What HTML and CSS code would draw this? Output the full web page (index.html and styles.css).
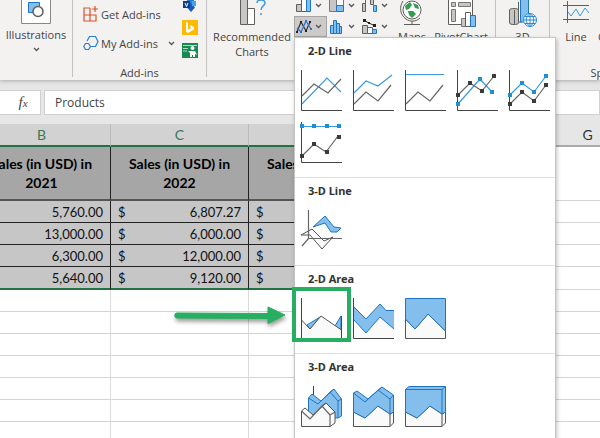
FILE: index.html
```html
<!DOCTYPE html>
<html lang="en">
<head>
	<meta charset="utf-8">
	<title>Sales workbook</title>
	<meta name="viewport" content="width=device-width, initial-scale=1">
	<link rel="stylesheet" href="styles.css">
</head>
<body>
	<div class="ribbon">
		<div class="group group-illustrations">
			<button class="big-btn">
				<svg class="boxed" width="30" height="24" viewBox="0 0 30 24">
					<path d="M.5 0V23.5H29.5V0" fill="#fff" stroke="#8a8886"/>
					<path d="M7.500 2.500H18.500V12.500H7.500Z" fill="#83beec" stroke="#1e76c3"/>
					<circle cx="17" cy="11.500" r="5" fill="#fff" stroke="#605e5c" stroke-width="1.500"/>
				</svg>
				<span>Illustrations</span>
				<svg class="caret" width="7" height="5" viewBox="0 0 7 5"><path d="M1 1L3.500 3.500L6 1"/></svg>
			</button>
		</div>
		<div class="group group-addins">
			<div class="group-body">
				<div class="addins">
					<button class="row-btn">
						<svg width="16" height="16" viewBox="0 0 16 16" fill="none" stroke="#d8532b" stroke-width="1.200">
							<path d="M7 2H1V15H13V9H1M7 2V15M12 0V6M9 3H15"/>
						</svg>
						<span>Get Add-ins</span>
					</button>
					<button class="row-btn">
						<svg width="16" height="16" viewBox="0 0 16 16" fill="none" stroke="#2b7cc7" stroke-width="1.200">
							<path d="M4 6L6.500 1.500H12.500L15 6.500L12.500 11.500H8"/>
							<path d="M2.500 8.500H5.500L7.500 11.500L5.500 14.500H2.500L.8 11.500Z"/>
						</svg>
						<span>My Add-ins</span>
						<svg class="caret" width="7" height="5" viewBox="0 0 7 5"><path d="M1 1L3.500 3.500L6 1"/></svg>
					</button>
				</div>
				<div class="apps">
					<button aria-label="Visio">
						<svg width="16" height="12" viewBox="0 0 16 12">
							<path d="M5 0H12V8H5Z" fill="#2b7cd3"/>
							<path d="M9 3L13 7.500L9 12L5 7.500Z" fill="#185abd"/>
							<path d="M10 1H14V6H10Z" fill="#41a5ee"/>
							<path d="M1 1H8V8H1Z" fill="#123f8c"/>
							<path d="M3 3L4.500 6.500L6 3" fill="none" stroke="#fff"/>
						</svg>
					</button>
					<button aria-label="Bing">
						<svg width="16" height="15" viewBox="0 0 16 15">
							<path d="M0 0H16V15H0Z" fill="#ffb900"/>
							<path d="M4 2L6 3V10L9 8L7.500 5L12 7V9.500L6 13L4 12Z" fill="#fff"/>
						</svg>
					</button>
					<button aria-label="People Graph">
						<svg width="16" height="15" viewBox="0 0 16 15">
							<path d="M0 0H16V15H0Z" fill="#178a50"/>
							<path d="M1 2.500H15M1 5.500H6M1 8H5" stroke="#a9dcc0"/>
							<circle cx="10.500" cy="5" r="2" fill="#fff"/>
							<path d="M6 8H13L15 12L13 11V14H11V12H10V14H8V10Z" fill="#fff"/>
						</svg>
					</button>
				</div>
			</div>
			<div class="group-label">Add-ins</div>
		</div>
		<div class="group group-charts">
			<button class="big-btn recommended">
				<svg width="30" height="26" viewBox="0 0 30 26" fill="none">
					<path d="M3.500 0V24.500H10.500V0" fill="#c8c6c4" stroke="#605e5c"/>
					<path d="M10.500 8.500H17.500V24.500H10.500Z" fill="#fff" stroke="#605e5c"/>
					<path d="M20 3C20 -1 28 -1 28 3C28 6 24 6 24 10M24 13V15" stroke="#3a9be0" stroke-width="1.500"/>
				</svg>
				<span>Recommended<br>Charts</span>
			</button>
			<div class="chart-types">
				<button aria-label="Column chart">
					<svg width="16" height="12" viewBox="0 0 16 12" stroke="#605e5c">
						<path d="M.5 4.500H5.500V11.500H.5Z" fill="#c8c6c4"/>
						<path d="M5.500 0V11.500H10.500V0" fill="#fff"/>
						<path d="M10.500 0V11.500H14.500V0" fill="#83beec" stroke="#1e76c3"/>
					</svg>
					<svg class="caret" width="7" height="5" viewBox="0 0 7 5"><path d="M1 1L3.500 3.500L6 1"/></svg>
				</button>
				<button aria-label="Hierarchy chart">
					<svg width="16" height="12" viewBox="0 0 16 12" stroke="#797775">
						<path d="M.5 0V11.500H7.500V0" fill="#c8c6c4"/>
						<path d="M7.500 0V5.500H14.500V0" fill="#fff"/>
						<path d="M7.500 5.500H14.500V11.500H7.500Z" fill="#83beec" stroke="#1e76c3"/>
					</svg>
					<svg class="caret" width="7" height="5" viewBox="0 0 7 5"><path d="M1 1L3.500 3.500L6 1"/></svg>
				</button>
				<button aria-label="Waterfall chart">
					<svg width="16" height="12" viewBox="0 0 16 12" stroke="#605e5c">
						<path d="M.5 3.500H3.500V11.500H.5ZM3.500 0V3.500M8.500 0V4.500H11.500V0" fill="#c8c6c4"/>
						<path d="M11.500 5.500H14.500V11.500H11.500Z" fill="#83beec" stroke="#1e76c3"/>
					</svg>
					<svg class="caret" width="7" height="5" viewBox="0 0 7 5"><path d="M1 1L3.500 3.500L6 1"/></svg>
				</button>
				<div class="dropdown">
					<button class="active" aria-label="Line or area chart" aria-expanded="true">
						<svg width="16" height="16" viewBox="0 0 16 16" fill="none" stroke-width="1.200">
							<path d="M1 13L5 3L10 12L14 3" stroke="#333"/>
							<path d="M1 9L5 13L10 2L15 10" stroke="#2f6fd0"/>
							<path d="M0 12h2v2H0ZM4 2h2v2H4ZM9 11h2v2H9ZM13 2h2v2H13Z" fill="#222"/>
							<path d="M4 12h2v2H4ZM9 1h2v2H9ZM14 9h2v2H14Z" fill="#2f6fd0"/>
						</svg>
						<svg class="caret" width="7" height="5" viewBox="0 0 7 5"><path d="M1 1L3.500 3.500L6 1"/></svg>
					</button>
					<div class="menu">
						<section>
							<h3>2-D Line</h3>
							<div class="gallery">
								<button aria-label="Line">
									<svg width="41" height="41" viewBox="0 0 41 41">
										<path class="axis" d="M.5 0V40.500H41"/>
										<path class="blue" d="M1 34L26 8L40 22"/>
										<path class="gray" d="M1 26L13 14L27 23L40 9"/>
									</svg>
								</button>
								<button aria-label="Stacked line">
									<svg width="41" height="41" viewBox="0 0 41 41">
										<path class="axis" d="M.5 0V40.500H41"/>
										<path class="blue" d="M1 23L13 11L25 16L39 5"/>
										<path class="gray" d="M1 34L13 22L25 31L38 15"/>
									</svg>
								</button>
								<button aria-label="100% stacked line">
									<svg width="41" height="41" viewBox="0 0 41 41">
										<path class="axis" d="M.5 0V40.500H41"/>
										<path class="blue" d="M1 4.500H39"/>
										<path class="gray" d="M1 34L13 22L25 31L38 15"/>
									</svg>
								</button>
								<button aria-label="Line with markers">
									<svg width="41" height="41" viewBox="0 0 41 41">
										<path class="axis" d="M.5 0V40.500H41"/>
										<path class="blue" d="M1 34L23 9L35 22"/>
										<path class="gray" d="M1 25L13 13L25 21L37 6"/>
										<path class="dot-blue" d="M-1 32h4v4h-4ZM21 7h4v4h-4ZM33 20h4v4h-4Z"/>
										<path class="dot-gray" d="M-1 23h4v4h-4ZM11 11h4v4h-4ZM23 19h4v4h-4ZM35 4h4v4h-4Z"/>
									</svg>
								</button>
								<button aria-label="Stacked line with markers">
									<svg width="41" height="41" viewBox="0 0 41 41">
										<path class="axis" d="M.5 0V40.500H41"/>
										<path class="blue" d="M1 25L13 13L25 22L37 6"/>
										<path class="gray" d="M1 34L13 22L25 31L37 15"/>
										<path class="dot-blue" d="M-1 23h4v4h-4ZM11 11h4v4h-4ZM23 20h4v4h-4ZM35 4h4v4h-4Z"/>
										<path class="dot-gray" d="M-1 32h4v4h-4ZM11 20h4v4h-4ZM23 29h4v4h-4ZM35 13h4v4h-4Z"/>
									</svg>
								</button>
								<button aria-label="100% stacked line with markers">
									<svg width="41" height="41" viewBox="0 0 41 41">
										<path class="axis" d="M.5 0V40.500H41"/>
										<path class="blue" d="M1 4.500H38"/>
										<path class="gray" d="M1 34L13 22L25 30L37 14"/>
										<path class="dot-blue" d="M-1 2h4v4h-4ZM11 2h4v4h-4ZM24 2h4v4h-4ZM36 2h4v4h-4Z"/>
										<path class="dot-gray" d="M-1 32h4v4h-4ZM11 20h4v4h-4ZM24 28h4v4h-4ZM36 13h4v4h-4Z"/>
									</svg>
								</button>
							</div>
						</section>
						<section>
							<h3>3-D Line</h3>
							<div class="gallery">
								<button aria-label="3-D line">
									<svg width="41" height="41" viewBox="0 0 41 41">
										<path class="fill-white" d="M0 25L11 19L23 31L32 27L21 39L9 25Z"/>
										<path class="gray" d="M7.500 0V28.500H41M7.500 28.500L1 36"/>
										<path class="fill-blue" d="M12 17L24 6L33 17L40 18L36 22H30L24 13Z"/>
									</svg>
								</button>
							</div>
						</section>
						<section>
							<h3>2-D Area</h3>
							<div class="gallery">
								<div class="marked">
									<button aria-label="Area">
										<svg width="41" height="41" viewBox="0 0 41 41">
											<path class="fill-blue" d="M6 27L19 19L9 31ZM34 28L40 18V32Z"/>
											<path class="fill-white" d="M.5 22L9 31L20 18L40.500 32V40.500H.5Z"/>
											<path class="axis" d="M.5 0V40.500H40.500V18"/>
										</svg>
									</button>
									<span class="mark"></span>
									<svg class="arrow" width="118" height="24" viewBox="0 0 118 24">
										<path d="M5 7L96 7.500V1L113 9L96 17.500V12.500L5 12C2 12 2 7 5 7Z" fill="#27ae60" stroke="#27ae60"/>
									</svg>
								</div>
								<button aria-label="Stacked area">
									<svg width="41" height="41" viewBox="0 0 41 41">
										<path d="M1 22L13 35L27 19L41 31V40H1Z" fill="#fafafa"/>
										<path d="M1 9L13 21L27 6L33 12.500H41V31L27 19L13 35L1 22Z" fill="#83beec"/>
										<path class="edge" d="M1 9L13 21L27 6L33 12.500H41M1 22L13 35L27 19L41 31"/>
										<path class="axis" d="M.5 0V40.500H41"/>
									</svg>
								</button>
								<button aria-label="100% stacked area">
									<svg width="41" height="41" viewBox="0 0 41 41">
										<path class="fill-white" d="M.5 21L10 31L23 16L40.500 33V40.500H.5Z"/>
										<path class="fill-blue" d="M.5 .5H40.500V33L23 16L10 31L.5 21Z"/>
									</svg>
								</button>
							</div>
						</section>
						<section>
							<h3>3-D Area</h3>
							<div class="gallery">
								<button aria-label="3-D area">
									<svg width="41" height="41" viewBox="0 0 41 41">
										<path class="axis" d="M12.500 0V10"/>
										<path class="fill-blue" d="M7.500 12L11 8L20 15L33 3L40.500 13V30L37 32H7.500Z"/>
										<path class="edge" d="M7.500 12L17 18L29 6L37 15V32M29 6L33 3M37 15L40.500 13"/>
										<path class="fill-white" d="M.5 25L4 22L12 29L25 17L34 26V37L29 40.500H.5Z"/>
										<path class="gray" d="M.5 25L9 33L21 20L29 29V40.500M21 20L25 17M29 29L34 26"/>
									</svg>
								</button>
								<button aria-label="3-D stacked area">
									<svg width="41" height="41" viewBox="0 0 41 41">
										<path class="fill-white" d="M.5 26L12 32L25 20L37 28L40.500 26V37L37 40.500H.5Z"/>
										<path class="gray" d="M37 28V40.500"/>
										<path class="fill-blue" d="M.5 7L4 5L15 13L29 1L40.500 9V26L37 28L25 20L12 32L.5 26Z"/>
										<path class="edge" d="M.5 7L12 16L25 4L37 13V28M12 16L15 13M25 4L29 1M37 13L40.500 9"/>
									</svg>
								</button>
								<button aria-label="3-D 100% stacked area">
									<svg width="41" height="41" viewBox="0 0 41 41">
										<path class="fill-white" d="M.5 26L12 32L25 20L37 28L40.500 26V37L37 40.500H.5Z"/>
										<path class="gray" d="M37 28V40.500"/>
										<path class="fill-blue" d="M.5 3.500L4 .5H40.500V26L37 28L25 20L12 32L.5 26Z"/>
										<path class="edge" d="M.5 3.500H37V28M37 3.500L40.500 .5"/>
									</svg>
								</button>
							</div>
						</section>
					</div>
				</div>
				<button aria-label="Statistic chart">
					<svg width="16" height="16" viewBox="0 0 16 16" fill="#83beec" stroke="#1e76c3">
						<path d="M1.500 6.500H4.500V14.500H1.500ZM4.500 1.500H7.500V14.500H4.500ZM7.500 4.500H10.500V14.500H7.500ZM10.500 7.500H12.500V14.500H10.500Z"/>
					</svg>
					<svg class="caret" width="7" height="5" viewBox="0 0 7 5"><path d="M1 1L3.500 3.500L6 1"/></svg>
				</button>
				<button aria-label="Combo chart">
					<svg width="16" height="16" viewBox="0 0 16 16" stroke="#605e5c">
						<path d="M.5 6.500H5.500V14.500H.5Z" fill="#c8c6c4"/>
						<path d="M5.500 8.500H10.500V14.500H5.500Z" fill="#fff"/>
						<path d="M10.500 10.500H14.500V14.500H10.500Z" fill="#83beec" stroke="#1e76c3"/>
						<path d="M2 1.500L13 7" stroke="#222"/>
						<path d="M1 0h3v3H1ZM6 3h2v2H6ZM11 5h3v3h-3Z" fill="#222" stroke="none"/>
					</svg>
					<svg class="caret" width="7" height="5" viewBox="0 0 7 5"><path d="M1 1L3.500 3.500L6 1"/></svg>
				</button>
			</div>
			<button class="big-btn maps">
				<svg width="26" height="26" viewBox="0 0 26 26" fill="none" stroke="#605e5c">
					<circle cx="13" cy="10" r="9" fill="#fff"/>
					<path d="M6 6L11 2L13 5L10 9L7 10ZM14 3L19 5L20 9L16 8ZM9 11L14 11L17 14L13 18L10 15Z" fill="#2f9e4f" stroke="none"/>
					<path d="M4 1C0 7 1 15 7 19C11 22 17 22 21 18M13 21V24M5 24.500H21"/>
				</svg>
				<span>Maps</span>
			</button>
			<button class="big-btn pivot">
				<svg width="30" height="26" viewBox="0 0 30 26" stroke="#605e5c">
					<path d="M2.500 0V24.500H26.500V0" fill="#fff"/>
					<path d="M5.500 2.500H9.500V6.500H5.500ZM12.500 2.500H24.500V6.500H12.500ZM5.500 9.500H9.500V21.500H5.500ZM15.500 18.500H19.500V26.500H15.500Z" fill="#c8c6c4" stroke="#797775"/>
					<path d="M19.500 12.500H24.500V26.500H19.500Z" fill="#fff"/>
					<path d="M24.500 15.500H29.500V26.500H24.500Z" fill="#83beec" stroke="#1e76c3"/>
				</svg>
				<span>PivotChart</span>
			</button>
		</div>
		<div class="group group-tours">
			<button class="big-btn">
				<svg width="30" height="26" viewBox="0 0 30 26" fill="none" stroke="#605e5c">
					<path d="M1.500 10C1.500 8 10.500 8 10.500 10V23C10.500 25 1.500 25 1.500 23Z" fill="#c8c6c4"/>
					<path d="M6.500 10V24M10.500 2V22H14V0" fill="#fff"/>
					<path d="M12.500 0V22H20.500V0" fill="#83beec" stroke="#1e76c3"/>
					<circle cx="22" cy="20" r="6.500" fill="#fff" stroke="#2b8ad6"/>
					<path d="M15.500 20H28.500M22 13.500V26.500M17 16.500H27M17 23.500H27M22 13.500C17 17 17 23 22 26.500C27 23 27 17 22 13.500" stroke="#2b8ad6"/>
				</svg>
				<span>3D</span>
			</button>
		</div>
		<div class="group group-sparklines">
			<div class="group-body">
				<button class="big-btn spark">
					<svg width="26" height="26" viewBox="0 0 26 26" fill="none" stroke="#605e5c">
						<path d="M0 5.500H26M0 19.500H26M4.500 1V23"/>
						<path d="M5 12L8 16L13 9L17 16L22 8L26 13" stroke="#3a9be0"/>
					</svg>
					<span>Line</span>
				</button>
				<button class="big-btn spark-column"><span class="no-icon">Column</span></button>
			</div>
			<div class="group-label">Sparklines</div>
		</div>
	</div>

	<div class="formula-bar">
		<button class="fx" aria-label="Insert function"><i>f<small>x</small></i></button>
		<input type="text" value="Products" aria-label="Formula bar">
	</div>

	<div class="sheet">
		<table>
			<colgroup>
				<col class="wide"><col class="wide"><col class="wide"><col class="narrow"><col class="narrow"><col class="mid"><col>
			</colgroup>
			<thead>
				<tr class="letters"><th class="sel">B</th><th class="sel">C</th><th class="sel">D</th><th></th><th></th><th>G</th><th></th></tr>
			</thead>
			<tbody>
				<tr class="titles"><th>Sales (in USD) in<br>2021</th><th>Sales (in USD) in<br>2022</th><th>Sales (in USD) in</th><td></td><td></td><td></td><td></td></tr>
				<tr class="data"><td>5,760.00</td><td><span>$</span>6,807.27</td><td><span>$</span></td><td></td><td></td><td></td><td></td></tr>
				<tr class="data"><td>13,000.00</td><td><span>$</span>6,000.00</td><td><span>$</span></td><td></td><td></td><td></td><td></td></tr>
				<tr class="data"><td>6,300.00</td><td><span>$</span>12,000.00</td><td><span>$</span></td><td></td><td></td><td></td><td></td></tr>
				<tr class="data last"><td>5,640.00</td><td><span>$</span>9,120.00</td><td><span>$</span></td><td></td><td></td><td></td><td></td></tr>
				<tr><td></td><td></td><td></td><td></td><td></td><td></td><td></td></tr>
				<tr><td></td><td></td><td></td><td></td><td></td><td></td><td></td></tr>
				<tr><td></td><td></td><td></td><td></td><td></td><td></td><td></td></tr>
				<tr><td></td><td></td><td></td><td></td><td></td><td></td><td></td></tr>
				<tr><td></td><td></td><td></td><td></td><td></td><td></td><td></td></tr>
				<tr><td></td><td></td><td></td><td></td><td></td><td></td><td></td></tr>
				<tr><td></td><td></td><td></td><td></td><td></td><td></td><td></td></tr>
			</tbody>
		</table>
	</div>
</body>
</html>
```

FILE: styles.css
```css
*{
    box-sizing: border-box;
}
body{
    margin: 0;
    height: 100vh;
    overflow: hidden;
    background: #e6e6e6;
    color: #444;
    font: 11px/15px "Open Sans", "Noto Sans", sans-serif;
}
button{
    padding: 0;
    border: 0;
    background: none;
    color: inherit;
    font: inherit;
}
svg{
    display: block;
    flex: none;
    overflow: visible;
}
.caret{
    fill: none;
    stroke: #555;
    stroke-width: 1.3;
}

/* ribbon */
.ribbon{
    position: relative;
    z-index: 2;
    display: flex;
    height: 80px;
    background: #f3f2f1;
    box-shadow: 0 1px 4px #aaa;
}
.group{
    display: flex;
    flex: none;
    flex-direction: column;
    height: 77px;
    border-right: 1px solid #c4c2c0;
}
.group-body{
    display: flex;
    height: 65px;
}
.group-label{
    line-height: 16px;
    margin-top: auto;
    margin-bottom: -4px;
    text-align: center;
}
.big-btn{
    display: flex;
    flex-direction: column;
    align-items: center;
    width: 100%;
}
.big-btn > svg + span{
    margin-top: 3px;
    white-space: nowrap;
}
.big-btn .caret{
    margin-top: 5px;
}
.group-illustrations{
    width: 73px;
}
.group-addins{
    width: 134px;
    padding-left: 10px;
}
.group-addins .group-label{
    margin-left: -10px;
}
.addins{
    display: flex;
    flex-direction: column;
    gap: 13px;
    width: 99px;
    padding-top: 6px;
}
.row-btn{
    display: flex;
    align-items: center;
    gap: 2px;
    height: 16px;
    white-space: nowrap;
}
.row-btn .caret{
    margin-left: 8px;
}
.apps{
    display: flex;
    flex-direction: column;
    gap: 8px;
}
.group-charts{
    flex-direction: row;
    align-items: flex-start;
    width: 289px;
    padding-left: 3px;
}
.recommended{
    width: 84px;
}
.chart-types{
    display: grid;
    grid-template-columns: repeat(3, 33px);
    grid-template-rows: 16px 21px;
}
.chart-types > button,
.dropdown > button{
    display: flex;
    gap: 3px;
    padding-left: 2px;
}
.chart-types > button .caret{
    margin-top: 3px;
}
.chart-types > button:nth-child(n+4),
.dropdown > button{
    align-items: center;
}
.chart-types > button:nth-child(n+4) .caret{
    margin-top: 0;
}
.dropdown{
    position: relative;
}
.dropdown .active{
    width: 33px;
    height: 21px;
    border: 1px solid #a6a4a2;
    background: #cdcbc9;
    padding-left: 1px;
}
.maps{
    width: 38px;
}
.pivot{
    width: 60px;
}
.group-tours{
    width: 54px;
}
.group-sparklines{
    width: 134px;
    padding-left: 4px;
    border: 0;
}
.group-sparklines .group-label{
    margin-left: -4px;
}
.spark{
    width: 44px;
}
.spark-column{
    width: 40px;
}
.no-icon{
    margin-top: 29px;
}

/* chart menu */
.menu{
    position: absolute;
    top: 100%;
    left: 0;
    width: 262px;
    padding-bottom: 40px;
    border: 1px solid #c8c6c4;
    background: #fff;
    box-shadow: 1px 2px 4px rgba(0,0,0,.25);
}
.menu section{
    padding-bottom: 9px;
}
.menu section + section{
    border-top: 1px solid #e1dfdd;
}
.menu h3{
    margin: 0;
    padding-left: 13px;
    color: #333;
    font: bold 11px/26px "Noto Sans", "Open Sans", sans-serif;
}
.gallery{
    display: grid;
    grid-template-columns: repeat(5, 52px);
}
.gallery button{
    width: 52px;
    height: 52px;
    padding: 6px 5px 5px 6px;
}
.axis,
.gray,
.blue,
.edge{
    fill: none;
}
.axis{
    stroke: #444;
}
.gray{
    stroke: #666;
    stroke-width: 1.2;
}
.blue{
    stroke: #3a9bdc;
    stroke-width: 1.2;
}
.edge{
    stroke: #1e76c3;
}
.dot-blue{
    fill: #1e8fd5;
}
.dot-gray{
    fill: #3b3b3b;
}
.fill-blue{
    fill: #83beec;
    stroke: #1e76c3;
}
.fill-white{
    fill: #fafafa;
    stroke: #555;
}
.marked{
    position: relative;
}
.mark{
    position: absolute;
    top: -5px;
    left: -3px;
    width: 59px;
    height: 55px;
    border: 4px solid #27ae60;
}
.arrow{
    position: absolute;
    top: 14px;
    right: 100%;
    margin-right: 5px;
    filter: drop-shadow(1px 3px 2px rgba(0,0,0,.4));
}

/* formula bar */
.formula-bar{
    display: flex;
    gap: 3px;
    height: 44px;
    padding: 10px 0 9px;
}
.fx{
    width: 41px;
    padding-left: 6px;
    border: 1px solid #d0d0d0;
    border-left: 0;
    background: #fff;
    font: 15px/20px "Liberation Serif", serif;
}
.fx small{
    font-size: 11px;
}
.formula-bar input{
    flex: 1;
    min-width: 0;
    padding: 0 10px;
    border: 1px solid #d0d0d0;
    background: #fff;
    color: #444;
    font: inherit;
    font-size: 12px;
}

/* sheet, first column starts left of the window */
.sheet{
    overflow: hidden;
    background: #fff;
}
table{
    width: calc(100% + 128px);
    margin-left: -27px;
    border-spacing: 0;
    table-layout: fixed;
    color: #111;
    font: 13px/18px Lato, sans-serif;
}
.wide{
    width: 138px;
}
.narrow{
    width: 72px;
}
.mid{
    width: 114px;
}
td, th{
    height: 22px;
    padding: 0;
    border-right: 1px solid #dadada;
    border-bottom: 1px solid #d4d4d4;
}
.letters th{
    height: 23px;
    border-right-color: #bbb;
    border-bottom: 2px solid #aaa;
    background: #e6e6e6;
    color: #333;
    font-size: 14px;
    font-weight: normal;
}
.letters .sel{
    border-bottom-color: #217346;
    background: #d2d2d2;
    color: #39795a;
}
.titles th,
.titles td{
    height: 54px;
}
.titles th{
    padding-top: 7px;
    border-right: 1px solid #222;
    border-bottom: 2px solid #555;
    background: #a6a6a6;
    color: #000;
    font-size: 14px;
    line-height: 19px;
    vertical-align: top;
    white-space: nowrap;
}
.data td{
    padding: 0 7px;
    text-align: right;
}
.data td:nth-child(-n+3){
    border-right: 1px solid #222;
    border-bottom: 1px solid #222;
    background: #c6c6c6;
}
.data span{
    float: left;
}
.data.last td{
    height: 23px;
}
.data.last td:nth-child(-n+3){
    border-bottom: 2px solid #217346;
}
```
